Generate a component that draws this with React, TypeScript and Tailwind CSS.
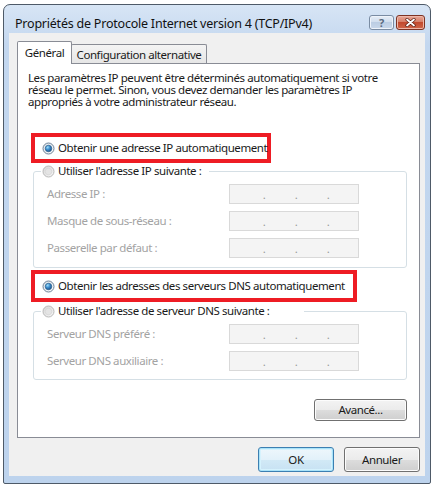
import React from "react";

function Radio({ checked }: { checked?: boolean }) {
  if (checked) {
    return (
      <svg width="13" height="13" viewBox="0 0 13 13" className="shrink-0">
        <defs>
          <linearGradient id="rbgOn" x1="0" y1="0" x2="1" y2="1">
            <stop offset="0" stopColor="#d8dde2" />
            <stop offset="1" stopColor="#fbfcfd" />
          </linearGradient>
          <radialGradient id="rdot" cx="0.35" cy="0.3" r="0.8">
            <stop offset="0" stopColor="#9fe0fb" />
            <stop offset="0.45" stopColor="#3d8fd0" />
            <stop offset="1" stopColor="#17487c" />
          </radialGradient>
        </defs>
        <circle cx="6.5" cy="6.5" r="5.5" fill="url(#rbgOn)" stroke="#6d8297" strokeWidth="1" />
        <circle cx="6.5" cy="6.5" r="3.2" fill="url(#rdot)" stroke="#2a5f8f" strokeWidth="0.8" />
      </svg>
    );
  }
  return (
    <svg width="13" height="13" viewBox="0 0 13 13" className="shrink-0">
      <defs>
        <linearGradient id="rbgOff" x1="0" y1="0" x2="1" y2="1">
          <stop offset="0" stopColor="#d6d6d6" />
          <stop offset="1" stopColor="#f8f8f8" />
        </linearGradient>
      </defs>
      <circle cx="6.5" cy="6.5" r="5.5" fill="url(#rbgOff)" stroke="#b9b9b9" strokeWidth="1" />
      <circle cx="6.5" cy="6.5" r="3.3" fill="#e4e4e4" stroke="#d2d2d2" strokeWidth="0.6" />
    </svg>
  );
}

function IpBox() {
  return (
    <div className="w-[130px] h-[20px] border border-[#d9d9d9] bg-[#f4f4f4] flex items-end pb-[2px] pl-[32px] gap-[28px] text-[#9a9a9a] leading-[12px]">
      <span className="w-[4px] text-center">.</span>
      <span className="w-[4px] text-center">.</span>
      <span className="w-[4px] text-center">.</span>
    </div>
  );
}

function Row({ label, first }: { label: string; first?: boolean }) {
  return (
    <div className={`flex items-center h-[20px] ml-[6px] ${first ? "mt-[6px]" : "mt-[7px]"}`}>
      <span className="w-[182px] text-[#a3a3a3] leading-[14px] whitespace-nowrap">{label}</span>
      <IpBox />
    </div>
  );
}

const btnBase =
  "rounded-[3px] border border-[#707070] bg-[linear-gradient(#f3f3f3,#ebebeb_50%,#dddddd_50%,#cfcfcf)] shadow-[inset_0_0_0_1px_#fcfcfc] flex items-center justify-center leading-[14px] text-[#1a1a1a]";

export default function App() {
  return (
    <div className="w-[432px] h-[485px] bg-white pl-[3px] pt-[4px] font-['Noto_Sans',sans-serif] text-[11.5px] tracking-[-0.42px] text-[#1a1a1a]">
      <div className="w-[428px] h-[480px] border border-[#4e5a68] rounded-t-[7px] rounded-b-[2px] bg-[linear-gradient(#d7e5f5,#c3d7ef_40px,#bdd3ed)] flex flex-col">
        {/* Title bar */}
        <div className="h-[28px] flex items-start pl-[11px] pr-[5px] shrink-0">
          <span className="mt-[12px] text-[12.5px] leading-[14px] tracking-[-0.22px] text-[#111] whitespace-nowrap">
            Propriétés de Protocole Internet version 4 (TCP/IPv4)
          </span>
          <div className="ml-auto mt-[10px] flex gap-[2px]">
            <div className="w-[25px] h-[15px] rounded-[3px] border border-[#7a8ca3] bg-[linear-gradient(#e6eef8,#cfdcec_50%,#bccde3_50%,#c9d8ea)] shadow-[inset_0_0_0_1px_#eef3fa] flex items-center justify-center">
              <span className="text-[11px] leading-[11px] font-bold text-[#5a6b80] tracking-normal">?</span>
            </div>
            <div className="w-[29px] h-[15px] rounded-[3px] border border-[#7d3324] bg-[linear-gradient(#e9a898,#d47a63_50%,#c24a2f_50%,#d0674a)] shadow-[inset_0_0_0_1px_#eeb8aa] flex items-center justify-center">
              <svg width="11" height="9" viewBox="0 0 11 9">
                <path d="M2 1.5 L9 7.5 M9 1.5 L2 7.5" stroke="#5a1c10" strokeWidth="3.2" strokeLinecap="round" />
                <path d="M2 1.5 L9 7.5 M9 1.5 L2 7.5" stroke="#ffffff" strokeWidth="1.8" strokeLinecap="round" />
              </svg>
            </div>
          </div>
        </div>

        {/* Content */}
        <div className="mx-[5px] h-[443px] bg-[#f0f0f0] pt-[8px] pl-[8px] pr-[5px] flex flex-col shrink-0">
          {/* Tabs */}
          <div className="flex items-end h-[22px] shrink-0">
            <div className="relative z-10 -mb-px h-[23px] w-[55px] border border-b-0 border-[#898c95] bg-white pt-[4px] text-center leading-[14px] rounded-t-[2px]">
              Général
            </div>
            <div className="h-[19px] w-[136px] -ml-px border border-b-0 border-[#898c95] bg-[linear-gradient(#f4f4f4,#e6e6e6)] pt-[3px] text-center leading-[14px] rounded-t-[2px] whitespace-nowrap">
              Configuration alternative
            </div>
          </div>

          {/* Panel */}
          <div className="h-[375px] border border-[#898c95] bg-white flex flex-col items-start shrink-0">
            <div className="ml-[10px] mt-[8px] h-[35px] flex flex-col whitespace-nowrap">
              <span className="h-[12px] leading-[12px]">Les paramètres IP peuvent être déterminés automatiquement si votre</span>
              <span className="h-[12px] leading-[12px]">réseau le permet. Sinon, vous devez demander les paramètres IP</span>
              <span className="h-[12px] leading-[12px]">appropriés à votre administrateur réseau.</span>
            </div>

            <div className="ml-[13px] mt-[26px] w-[240px] h-[30px] border-4 border-[#ee1c24] flex items-center pl-[7px] gap-[3px]">
              <Radio checked />
              <span className="leading-[14px] whitespace-nowrap">Obtenir une adresse IP automatiquement</span>
            </div>

            <fieldset className="ml-[15px] mt-[1px] w-[374px] border border-[#d5dfe5] rounded-[3px] pl-[7px] pb-[9px]">
              <legend className="flex items-center h-[14px] pl-[1px] pr-[8px] gap-[3px]">
                <Radio />
                <span className="leading-[14px] whitespace-nowrap">Utiliser l'adresse IP suivante :</span>
              </legend>
              <Row label="Adresse IP :" first />
              <Row label="Masque de sous-réseau :" />
              <Row label="Passerelle par défaut :" />
            </fieldset>

            <div className="ml-[13px] mt-[2px] w-[326px] h-[32px] border-4 border-[#ee1c24] flex items-center pl-[7px] gap-[3px]">
              <Radio checked />
              <span className="leading-[14px] whitespace-nowrap">Obtenir les adresses des serveurs DNS automatiquement</span>
            </div>

            <fieldset className="ml-[15px] mt-[2px] w-[374px] border border-[#d5dfe5] rounded-[3px] pl-[7px] pb-[8px]">
              <legend className="flex items-center h-[14px] pl-[1px] pr-[35px] gap-[3px]">
                <Radio />
                <span className="leading-[14px] whitespace-nowrap">Utiliser l'adresse de serveur DNS suivante :</span>
              </legend>
              <Row label="Serveur DNS préféré :" first />
              <Row label="Serveur DNS auxiliaire :" />
            </fieldset>

            <div className="self-end mr-[12px] mt-[19px]">
              <div className={`h-[22px] w-[93px] ${btnBase}`}>Avancé...</div>
            </div>
          </div>

          {/* Bottom buttons */}
          <div className="mt-[9px] flex justify-end gap-[10px] shrink-0">
            <div className="h-[25px] w-[76px] rounded-[3px] border border-[#3c7fb1] bg-[linear-gradient(#eef7fc,#e2f1fa_50%,#d2e9f6_50%,#c7e2f3)] shadow-[inset_0_0_0_1px_#a9e3f9,inset_0_0_0_2px_#d6f2fd] flex items-center justify-center leading-[14px]">
              OK
            </div>
            <div className={`h-[25px] w-[76px] ${btnBase}`}>Annuler</div>
          </div>
        </div>
      </div>
    </div>
  );
}
